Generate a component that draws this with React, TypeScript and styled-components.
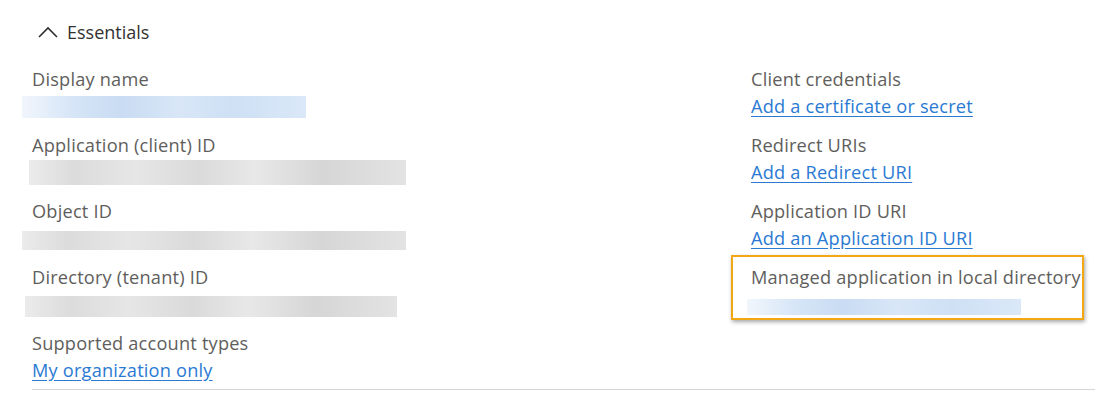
import styled, { createGlobalStyle } from "styled-components";

const GlobalStyle = createGlobalStyle`
  body {
    margin: 0;
    background: #ffffff;
    font-family: "Open Sans", "Noto Sans", sans-serif;
  }
`;

const Panel = styled.section`
  padding: 18px 0 0 32px;
`;

const Header = styled.div`
  display: flex;
  align-items: center;
  gap: 9px;
  height: 28px;
  padding-left: 6px;
  color: #323130;
  font-size: 18px;
  font-weight: 500;
`;

const Grid = styled.div`
  display: grid;
  grid-template-columns: 719px 1fr;
  margin-top: 20px;
`;

const Column = styled.div`
  display: flex;
  flex-direction: column;
  gap: 12px;
`;

const Field = styled.div<{ $highlight?: boolean }>`
  position: relative;
  display: flex;
  flex-direction: column;

  ${({ $highlight }) =>
    $highlight &&
    `
    &::after {
      content: "";
      position: absolute;
      left: -20px;
      top: -9px;
      width: 353px;
      height: 65px;
      border: 2px solid #f3a712;
      box-shadow: 1px 2px 4px rgba(0, 0, 0, 0.35);
      box-sizing: border-box;
    }
  `}
`;

const Label = styled.div`
  height: 27px;
  line-height: 27px;
  font-size: 18.2px;
  letter-spacing: 0.2px;
  color: #605e5c;
  white-space: nowrap;
`;

const Link = styled.a`
  height: 27px;
  line-height: 27px;
  font-size: 18.2px;
  letter-spacing: 0.2px;
  color: #2a7ad3;
  text-decoration: underline;
  text-underline-offset: 3px;
  white-space: nowrap;
  align-self: flex-start;
  cursor: pointer;
`;

const ValueRow = styled.div`
  height: 27px;
  display: flex;
  align-items: center;
`;

const Redacted = styled.div<{ $w: number; $h: number; $x: number; $dy?: number; $blue?: boolean }>`
  width: ${({ $w }) => $w}px;
  height: ${({ $h }) => $h}px;
  margin-left: ${({ $x }) => $x}px;
  margin-top: ${({ $dy = 0 }) => $dy}px;
  background: ${({ $blue }) =>
    $blue
      ? "linear-gradient(90deg, #f1f6fc 0%, #d6e5f7 18%, #c9dcf3 35%, #d8e6f7 55%, #cfe0f5 75%, #dae8f8 100%)"
      : "linear-gradient(90deg, #ebebeb 0%, #dcdcdc 12%, #e6e6e6 28%, #dadada 45%, #e8e8e8 60%, #d6d6d6 78%, #e3e3e3 100%)"};
`;

const Divider = styled.hr`
  margin: 5px 0 0;
  border: 0;
  border-top: 1px solid #d6d6d6;
`;

function Chevron() {
  return (
    <svg width="20" height="12" viewBox="0 0 20 12" fill="none">
      <polyline points="1,11 10,2 19,11" stroke="#323130" strokeWidth="1.6" />
    </svg>
  );
}

export default function App() {
  return (
    <>
      <GlobalStyle />
      <Panel>
        <Header>
          <Chevron />
          <span>Essentials</span>
        </Header>
        <Grid>
          <Column>
            <Field>
              <Label>Display name</Label>
              <ValueRow>
                <Redacted $blue $w={284} $h={22} $x={-10} />
              </ValueRow>
            </Field>
            <Field>
              <Label>Application (client) ID</Label>
              <ValueRow>
                <Redacted $w={377} $h={25} $x={-3} />
              </ValueRow>
            </Field>
            <Field>
              <Label>Object ID</Label>
              <ValueRow>
                <Redacted $w={384} $h={19} $x={-10} $dy={4} />
              </ValueRow>
            </Field>
            <Field>
              <Label>Directory (tenant) ID</Label>
              <ValueRow>
                <Redacted $w={372} $h={21} $x={-7} $dy={4} />
              </ValueRow>
            </Field>
            <Field>
              <Label>Supported account types</Label>
              <Link>My organization only</Link>
            </Field>
          </Column>
          <Column>
            <Field>
              <Label>Client credentials</Label>
              <Link>Add a certificate or secret</Link>
            </Field>
            <Field>
              <Label>Redirect URIs</Label>
              <Link>Add a Redirect URI</Link>
            </Field>
            <Field>
              <Label>Application ID URI</Label>
              <Link>Add an Application ID URI</Link>
            </Field>
            <Field $highlight>
              <Label>Managed application in local directory</Label>
              <ValueRow>
                <Redacted $blue $w={274} $h={16} $x={-4} $dy={4} />
              </ValueRow>
            </Field>
          </Column>
        </Grid>
        <Divider />
      </Panel>
    </>
  );
}
